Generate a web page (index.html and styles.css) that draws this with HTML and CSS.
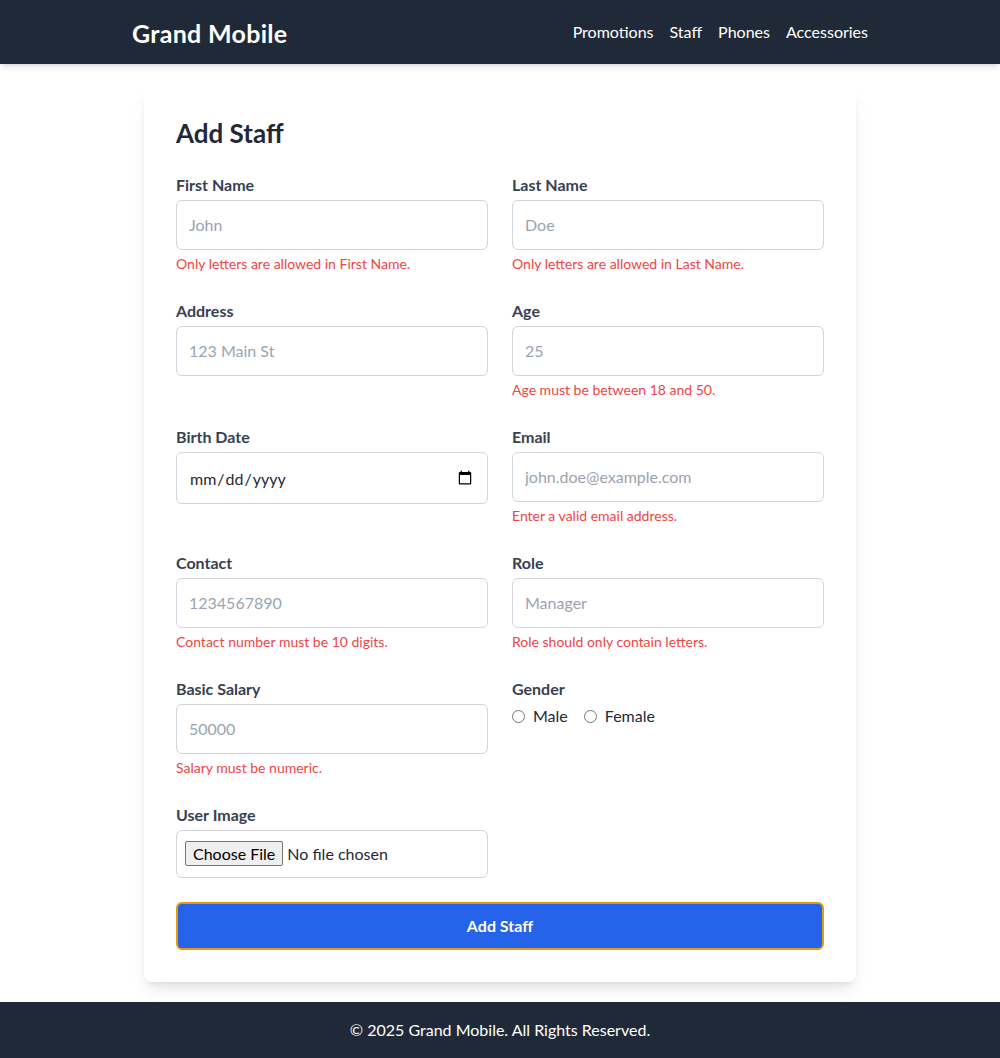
FILE: index.html
```html
<!DOCTYPE html>
<html lang="en">
<head>
<meta charset="utf-8">
<title>Add Staff - Grand Mobile</title>
<link rel="stylesheet" href="styles.css">
</head>
<body>
<header class="topbar">
  <div class="topbar-inner">
    <div class="logo">Grand Mobile</div>
    <nav class="nav">
      <a href="#">Promotions</a>
      <a href="#">Staff</a>
      <a href="#">Phones</a>
      <a href="#">Accessories</a>
    </nav>
  </div>
</header>
<main class="main">
  <form class="card">
    <h1 class="title">Add Staff</h1>
    <div class="grid">
      <div class="field">
        <label class="label">First Name</label>
        <input class="input" type="text" placeholder="John">
        <p class="error">Only letters are allowed in First Name.</p>
      </div>
      <div class="field">
        <label class="label">Last Name</label>
        <input class="input" type="text" placeholder="Doe">
        <p class="error">Only letters are allowed in Last Name.</p>
      </div>
      <div class="field">
        <label class="label">Address</label>
        <input class="input" type="text" placeholder="123 Main St">
      </div>
      <div class="field">
        <label class="label">Age</label>
        <input class="input" type="text" placeholder="25">
        <p class="error">Age must be between 18 and 50.</p>
      </div>
      <div class="field">
        <label class="label">Birth Date</label>
        <input class="input date" type="date">
      </div>
      <div class="field">
        <label class="label">Email</label>
        <input class="input" type="text" placeholder="john.doe@example.com">
        <p class="error">Enter a valid email address.</p>
      </div>
      <div class="field">
        <label class="label">Contact</label>
        <input class="input" type="text" placeholder="1234567890">
        <p class="error">Contact number must be 10 digits.</p>
      </div>
      <div class="field">
        <label class="label">Role</label>
        <input class="input" type="text" placeholder="Manager">
        <p class="error">Role should only contain letters.</p>
      </div>
      <div class="field">
        <label class="label">Basic Salary</label>
        <input class="input" type="text" placeholder="50000">
        <p class="error">Salary must be numeric.</p>
      </div>
      <div class="field">
        <label class="label">Gender</label>
        <div class="radios">
          <label class="radio"><input type="radio" name="gender"><span>Male</span></label>
          <label class="radio"><input type="radio" name="gender"><span>Female</span></label>
        </div>
      </div>
      <div class="field field-last">
        <label class="label">User Image</label>
        <input class="input file" type="file">
      </div>
    </div>
    <button class="submit" type="button">Add Staff</button>
  </form>
</main>
<footer class="footer">© 2025 Grand Mobile. All Rights Reserved.</footer>
</body>
</html>
```

FILE: styles.css
```css
* { box-sizing: border-box; }
html, body { margin: 0; padding: 0; }
body {
  font-family: Lato, "Noto Sans", "Liberation Sans", sans-serif;
  background: #ffffff;
  color: #1f2937;
  font-size: 16px;
  line-height: 24px;
}
.topbar {
  background: #1f2937;
  height: 64px;
  box-shadow: 0 4px 6px -1px rgba(0,0,0,0.1), 0 2px 4px -2px rgba(0,0,0,0.1);
  position: relative;
  z-index: 1;
}
.topbar-inner {
  width: 736px;
  margin: 0 auto;
  height: 64px;
  display: flex;
  align-items: center;
  justify-content: space-between;
}
.logo {
  color: #ffffff;
  font-size: 25px;
  font-weight: 700;
  letter-spacing: 0.3px;
  line-height: 32px;
  padding-top: 2px;
}
.nav { display: flex; gap: 16px; }
.nav a {
  color: #ffffff;
  text-decoration: none;
  font-size: 16px;
}
.main {
  padding: 24px 0 20px;
}
.card {
  width: 712px;
  margin: 0 auto;
  background: #ffffff;
  border-radius: 8px;
  padding: 32px;
  box-shadow: 0 10px 15px -3px rgba(0,0,0,0.1), 0 4px 6px -4px rgba(0,0,0,0.1);
}
.title {
  margin: 0 0 30px;
  font-size: 26px;
  line-height: 26px;
  font-weight: 700;
  color: #1f2937;
}
.grid {
  display: grid;
  grid-template-columns: 1fr 1fr;
  column-gap: 24px;
  row-gap: 28px;
}
.field { display: flex; flex-direction: column; min-height: 98px; }
.field-last { min-height: 0; }
.label {
  font-weight: 700;
  color: #374151;
  font-size: 16px;
  line-height: 18px;
  padding-bottom: 6px;
}
.input {
  height: 50px;
  width: 100%;
  border: 1px solid #d1d5db;
  border-radius: 6px;
  padding: 0 12px 2px;
  font-family: inherit;
  font-size: 16px;
  color: #1f2937;
  background: #fff;
}
.input::placeholder { color: #9ca3af; }
.input.date { height: 52px; padding: 0 12px; }
.input.file {
  height: 48px;
  padding: 0 8px;
  display: flex;
  align-items: center;
  line-height: 46px;
}
.input.file::file-selector-button {
  font-family: inherit;
  font-size: 16px;
  padding: 2px 7px;
  margin-right: 4px;
  border: 1px solid #767676;
  border-radius: 2px;
  background: #efefef;
  color: #000;
}
.error {
  margin: 4px 0 0;
  font-size: 14px;
  line-height: 20px;
  color: #ef4444;
}
.radios { display: flex; gap: 16px; }
.radio { display: flex; align-items: center; color: #1f2937; }
.radio input { margin: 0 8px 0 0; width: 13px; height: 13px; }
.submit {
  display: block;
  width: 100%;
  margin-top: 24px;
  height: 48px;
  padding-bottom: 2px;
  background: #2563eb;
  color: #fff;
  font-family: inherit;
  font-size: 16px;
  font-weight: 700;
  border: 2px solid #e29a12;
  border-radius: 6px;
}
.footer {
  background: #1f2937;
  color: #fff;
  height: 56px;
  display: flex;
  align-items: center;
  justify-content: center;
  font-size: 16px;
}
```
